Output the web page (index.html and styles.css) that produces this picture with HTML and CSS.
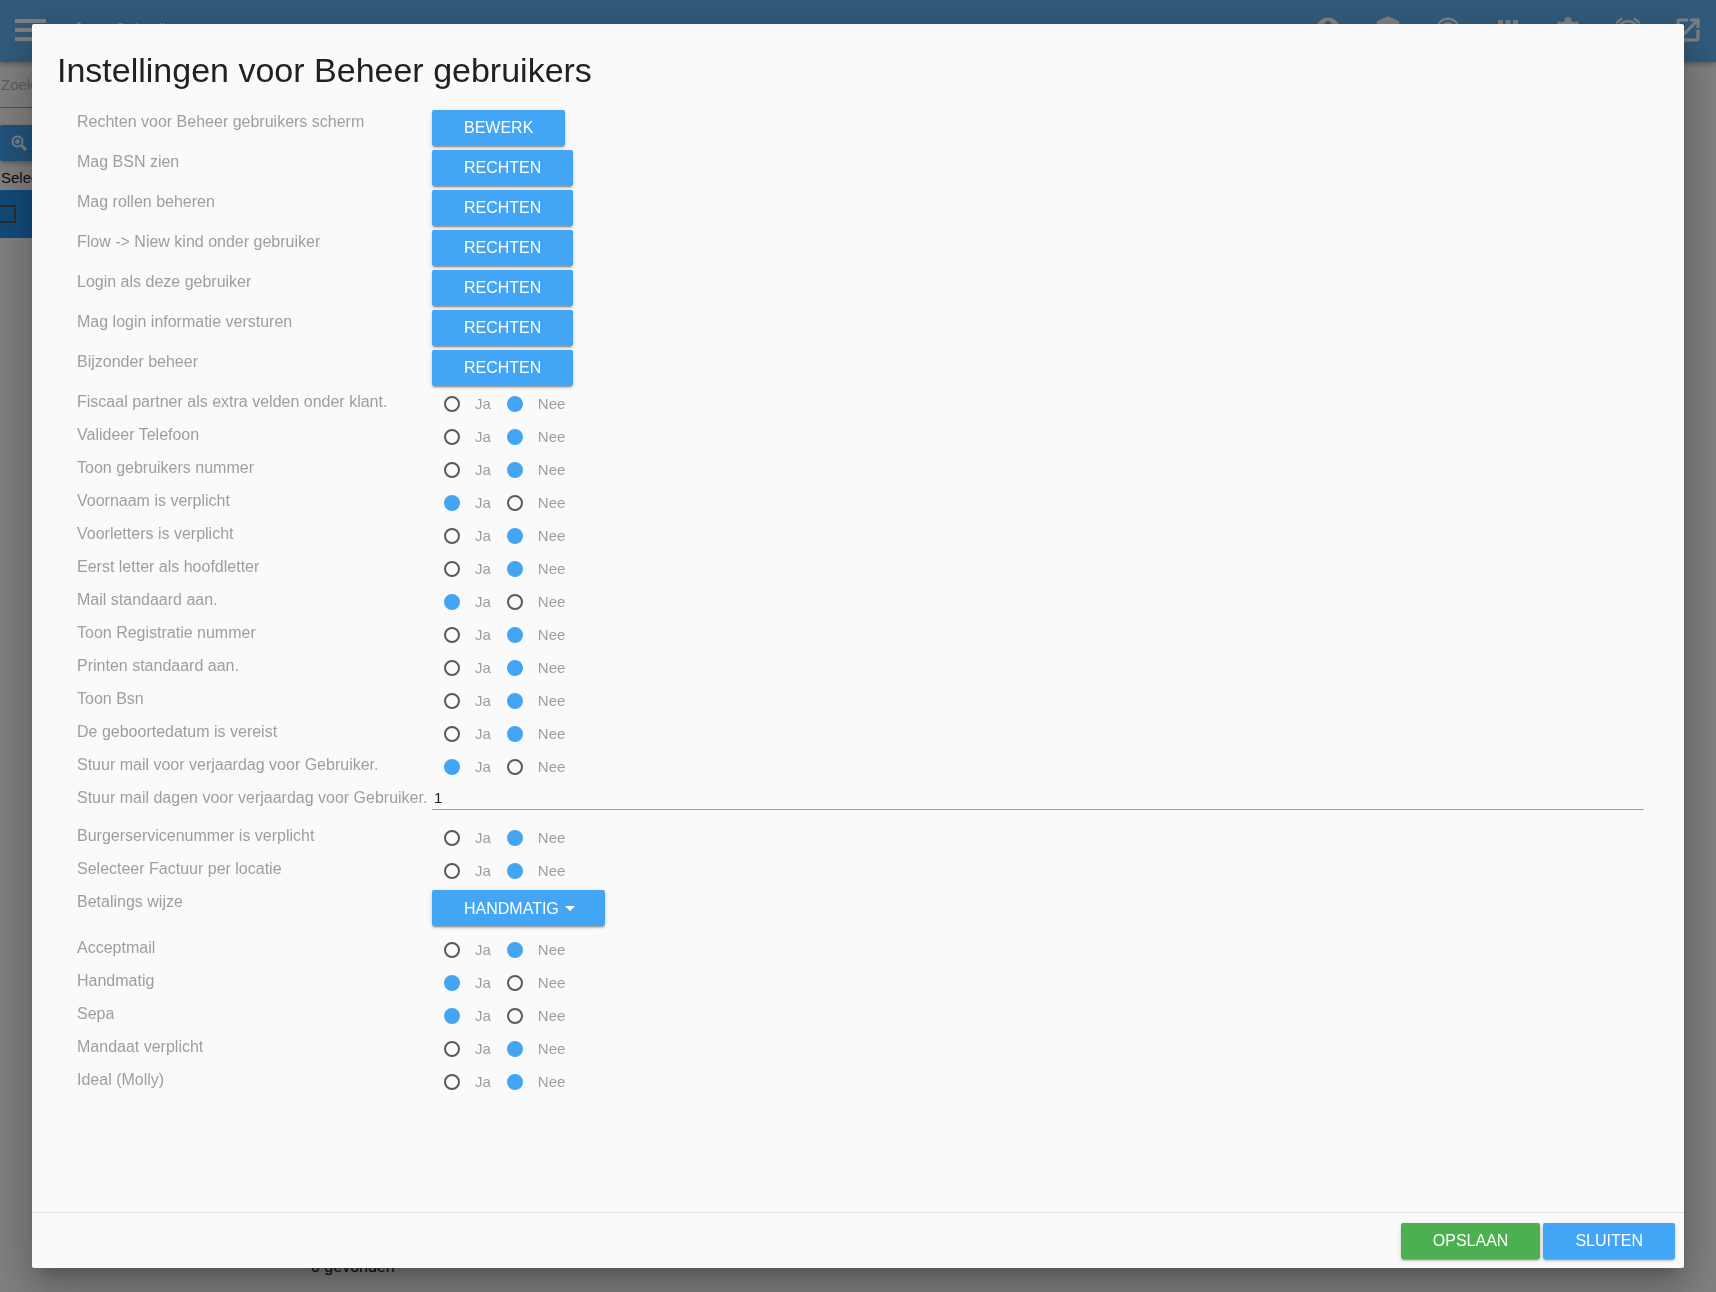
FILE: index.html
```html
<!DOCTYPE html>
<html lang="nl">
<head>
  <meta charset="UTF-8">
  <meta name="viewport" content="width=device-width, initial-scale=1.0">
  <title>Beheer gebruikers</title>
  <link rel="stylesheet" href="styles.css">
</head>
<body>
  <div class="page">
    <header class="topbar">
      <a href="#" class="menu" aria-label="Menu"><span></span><span></span><span></span></a>
      <a href="#" class="crumb">
        <svg viewBox="0 0 24 24"><path d="M12 3L1 13h3v8h6v-6h4v6h6v-8h3z"/></svg>
        Gebruikers
      </a>
      <nav class="tools">
        <a href="#" aria-label="Account"><svg viewBox="0 0 24 24"><path d="M12 2C6.480 2 2 6.480 2 12s4.480 10 10 10 10-4.480 10-10S17.520 2 12 2zm0 3c1.660 0 3 1.340 3 3s-1.340 3-3 3-3-1.340-3-3 1.340-3 3-3zm0 14.200c-2.500 0-4.710-1.280-6-3.220.03-1.990 4-3.080 6-3.080s5.970 1.090 6 3.080c-1.290 1.940-3.500 3.220-6 3.220z"/></svg></a>
        <a href="#" aria-label="Rechten"><svg viewBox="0 0 24 24"><path d="M12 1L3 5v6c0 5.550 3.840 10.740 9 12 5.160-1.260 9-6.450 9-12V5l-9-4z"/></svg></a>
        <a href="#" aria-label="Status"><svg viewBox="0 0 24 24"><circle class="line" cx="12" cy="12" r="9"/><circle class="line" cx="12" cy="12" r="5.500"/></svg></a>
        <a href="#" aria-label="Apps"><svg viewBox="0 0 24 24"><path d="M4 8h4V4H4v4zm6 12h4v-4h-4v4zm-6 0h4v-4H4v4zm0-6h4v-4H4v4zm6 0h4v-4h-4v4zm6-10v4h4V4h-4zm-6 4h4V4h-4v4zm6 6h4v-4h-4v4zm0 6h4v-4h-4v4z"/></svg></a>
        <a href="#" aria-label="Instellingen"><svg viewBox="0 0 24 24"><path d="M19.430 12.980c.04-.32.07-.64.07-.98s-.03-.66-.07-.98l2.110-1.650c.19-.15.24-.42.12-.64l-2-3.460c-.12-.22-.39-.3-.61-.22l-2.490 1c-.52-.4-1.080-.73-1.690-.98l-.38-2.650C14.460 2.180 14.250 2 14 2h-4c-.25 0-.46.18-.49.42l-.38 2.650c-.61.25-1.170.59-1.690.98l-2.490-1c-.23-.09-.49 0-.61.22l-2 3.460c-.13.22-.07.49.12.64l2.110 1.650c-.04.32-.07.65-.07.98s.03.66.07.98l-2.110 1.650c-.19.15-.24.42-.12.64l2 3.460c.12.22.39.3.61.22l2.490-1c.52.4 1.080.73 1.690.98l.38 2.650c.03.24.24.42.49.42h4c.25 0 .46-.18.49-.42l.38-2.650c.61-.25 1.170-.59 1.690-.98l2.490 1c.23.09.49 0 .61-.22l2-3.460c.12-.22.07-.49-.12-.64l-2.110-1.650zM12 15.500c-1.930 0-3.500-1.570-3.500-3.500s1.570-3.500 3.500-3.500 3.500 1.570 3.500 3.500-1.570 3.500-3.500 3.500z"/></svg></a>
        <a href="#" aria-label="Wekker"><svg viewBox="0 0 24 24"><path d="M22 5.720l-4.600-3.860-1.290 1.530 4.600 3.860L22 5.720zM7.880 3.390L6.600 1.860 2 5.710l1.290 1.530 4.590-3.850zM12.500 8H11v6l4.750 2.850.75-1.230-4-2.370V8zM12 4c-4.970 0-9 4.030-9 9s4.020 9 9 9 9-4.030 9-9-4.030-9-9-9zm0 16c-3.870 0-7-3.130-7-7s3.130-7 7-7 7 3.130 7 7-3.130 7-7 7z"/></svg></a>
        <a href="#" aria-label="Openen"><svg class="bold" viewBox="0 0 24 24"><path d="M19 19H5V5h7V3H5c-1.110 0-2 .9-2 2v14c0 1.100.89 2 2 2h14c1.100 0 2-.9 2-2v-7h-2v7zM14 3v2h3.590l-9.830 9.830 1.410 1.410L19 6.410V10h2V3h-7z"/></svg></a>
      </nav>
    </header>
    <input class="search" type="text" placeholder="Zoeken" aria-label="Zoeken">
    <button class="search-btn" type="button" aria-label="Zoek">
      <svg viewBox="0 0 16 16"><circle cx="6.500" cy="6.500" r="5"/><path class="handle" d="M10.500 10.500L15 15"/><path d="M6.500 4v5M4 6.500h5"/></svg>
    </button>
    <div class="list-head">Selecteer</div>
    <div class="list-row"><input type="checkbox" aria-label="Selecteer rij"></div>
    <div class="found">0 gevonden</div>
  </div>

  <div class="overlay">
    <form class="modal" role="dialog" aria-labelledby="title">
      <div class="modal-content">
        <h4 id="title">Instellingen voor Beheer gebruikers</h4>

        <div class="row row-btn"><label for="b1">Rechten voor Beheer gebruikers scherm</label><button type="button" class="btn" id="b1">BEWERK</button></div>
        <div class="row row-btn"><label for="b2">Mag BSN zien</label><button type="button" class="btn" id="b2">RECHTEN</button></div>
        <div class="row row-btn"><label for="b3">Mag rollen beheren</label><button type="button" class="btn" id="b3">RECHTEN</button></div>
        <div class="row row-btn"><label for="b4">Flow -&gt; Niew kind onder gebruiker</label><button type="button" class="btn" id="b4">RECHTEN</button></div>
        <div class="row row-btn"><label for="b5">Login als deze gebruiker</label><button type="button" class="btn" id="b5">RECHTEN</button></div>
        <div class="row row-btn"><label for="b6">Mag login informatie versturen</label><button type="button" class="btn" id="b6">RECHTEN</button></div>
        <div class="row row-btn"><label for="b7">Bijzonder beheer</label><button type="button" class="btn" id="b7">RECHTEN</button></div>

        <div class="row" role="radiogroup" aria-labelledby="l1"><span id="l1">Fiscaal partner als extra velden onder klant.</span><div class="choice"><label><input type="radio" name="r1">Ja</label><label><input type="radio" name="r1" checked>Nee</label></div></div>
        <div class="row" role="radiogroup" aria-labelledby="l2"><span id="l2">Valideer Telefoon</span><div class="choice"><label><input type="radio" name="r2">Ja</label><label><input type="radio" name="r2" checked>Nee</label></div></div>
        <div class="row" role="radiogroup" aria-labelledby="l3"><span id="l3">Toon gebruikers nummer</span><div class="choice"><label><input type="radio" name="r3">Ja</label><label><input type="radio" name="r3" checked>Nee</label></div></div>
        <div class="row" role="radiogroup" aria-labelledby="l4"><span id="l4">Voornaam is verplicht</span><div class="choice"><label><input type="radio" name="r4" checked>Ja</label><label><input type="radio" name="r4">Nee</label></div></div>
        <div class="row" role="radiogroup" aria-labelledby="l5"><span id="l5">Voorletters is verplicht</span><div class="choice"><label><input type="radio" name="r5">Ja</label><label><input type="radio" name="r5" checked>Nee</label></div></div>
        <div class="row" role="radiogroup" aria-labelledby="l6"><span id="l6">Eerst letter als hoofdletter</span><div class="choice"><label><input type="radio" name="r6">Ja</label><label><input type="radio" name="r6" checked>Nee</label></div></div>
        <div class="row" role="radiogroup" aria-labelledby="l7"><span id="l7">Mail standaard aan.</span><div class="choice"><label><input type="radio" name="r7" checked>Ja</label><label><input type="radio" name="r7">Nee</label></div></div>
        <div class="row" role="radiogroup" aria-labelledby="l8"><span id="l8">Toon Registratie nummer</span><div class="choice"><label><input type="radio" name="r8">Ja</label><label><input type="radio" name="r8" checked>Nee</label></div></div>
        <div class="row" role="radiogroup" aria-labelledby="l9"><span id="l9">Printen standaard aan.</span><div class="choice"><label><input type="radio" name="r9">Ja</label><label><input type="radio" name="r9" checked>Nee</label></div></div>
        <div class="row" role="radiogroup" aria-labelledby="l10"><span id="l10">Toon Bsn</span><div class="choice"><label><input type="radio" name="r10">Ja</label><label><input type="radio" name="r10" checked>Nee</label></div></div>
        <div class="row" role="radiogroup" aria-labelledby="l11"><span id="l11">De geboortedatum is vereist</span><div class="choice"><label><input type="radio" name="r11">Ja</label><label><input type="radio" name="r11" checked>Nee</label></div></div>
        <div class="row" role="radiogroup" aria-labelledby="l12"><span id="l12">Stuur mail voor verjaardag voor Gebruiker.</span><div class="choice"><label><input type="radio" name="r12" checked>Ja</label><label><input type="radio" name="r12">Nee</label></div></div>

        <div class="row row-text"><label for="dagen">Stuur mail dagen voor verjaardag voor Gebruiker.</label><input type="text" id="dagen" value="1"></div>

        <div class="row" role="radiogroup" aria-labelledby="l13"><span id="l13">Burgerservicenummer is verplicht</span><div class="choice"><label><input type="radio" name="r13">Ja</label><label><input type="radio" name="r13" checked>Nee</label></div></div>
        <div class="row" role="radiogroup" aria-labelledby="l14"><span id="l14">Selecteer Factuur per locatie</span><div class="choice"><label><input type="radio" name="r14">Ja</label><label><input type="radio" name="r14" checked>Nee</label></div></div>

        <div class="row row-select"><label for="wijze">Betalings wijze</label><div class="dropdown"><select class="btn" id="wijze"><option>HANDMATIG</option></select></div></div>

        <div class="row" role="radiogroup" aria-labelledby="l15"><span id="l15">Acceptmail</span><div class="choice"><label><input type="radio" name="r15">Ja</label><label><input type="radio" name="r15" checked>Nee</label></div></div>
        <div class="row" role="radiogroup" aria-labelledby="l16"><span id="l16">Handmatig</span><div class="choice"><label><input type="radio" name="r16" checked>Ja</label><label><input type="radio" name="r16">Nee</label></div></div>
        <div class="row" role="radiogroup" aria-labelledby="l17"><span id="l17">Sepa</span><div class="choice"><label><input type="radio" name="r17" checked>Ja</label><label><input type="radio" name="r17">Nee</label></div></div>
        <div class="row" role="radiogroup" aria-labelledby="l18"><span id="l18">Mandaat verplicht</span><div class="choice"><label><input type="radio" name="r18">Ja</label><label><input type="radio" name="r18" checked>Nee</label></div></div>
        <div class="row" role="radiogroup" aria-labelledby="l19"><span id="l19">Ideal (Molly)</span><div class="choice"><label><input type="radio" name="r19">Ja</label><label><input type="radio" name="r19" checked>Nee</label></div></div>
      </div>
      <div class="modal-footer">
        <button type="button" class="btn green">OPSLAAN</button>
        <button type="button" class="btn">SLUITEN</button>
      </div>
    </form>
  </div>
</body>
</html>
```
FILE: styles.css
```css
* {
  box-sizing: border-box;
}
body {
  margin: 0;
  font-family: "Liberation Sans", Arial, sans-serif;
  font-size: 16px;
  line-height: 24px;
  color: #212121;
  background-color: #fff;
}
input, button, select {
  font-family: inherit;
  font-size: inherit;
}

/* page behind the modal */
.page {
  display: flex;
  flex-direction: column;
  align-items: flex-start;
  height: 100vh;
  overflow: hidden;
}
.topbar {
  display: flex;
  align-items: center;
  align-self: stretch;
  height: 62px;
  flex-shrink: 0;
  padding: 0 13px 0 15px;
  background-color: #64b5f6;
  box-shadow: 0 2px 5px rgba(0, 0, 0, 0.3);
}
.topbar a {
  color: #fff;
  text-decoration: none;
}
.menu {
  display: flex;
  flex-direction: column;
  gap: 5px;
  width: 31px;
  padding-bottom: 3px;
}
.menu span {
  height: 4px;
  background-color: #fff;
}
.crumb {
  display: flex;
  align-items: center;
  gap: 24px;
  margin-left: 22px;
  padding-bottom: 2px;
}
.crumb svg {
  width: 22px;
  height: 22px;
  fill: #fff;
}
.tools {
  display: flex;
  gap: 30px;
  margin-left: auto;
  padding-bottom: 2px;
}
.tools a, .tools svg {
  display: block;
  width: 30px;
  height: 30px;
  fill: #fff;
}
.tools .line {
  fill: none;
  stroke: #fff;
  stroke-width: 2;
}
.tools .bold {
  stroke: #fff;
  stroke-width: 0.5;
}
.search {
  width: 300px;
  height: 46px;
  padding: 0 1px;
  border: 0;
  border-bottom: 1px solid #9e9e9e;
  font-size: 15px;
  background: none;
}
.search::placeholder {
  color: #bdbdbd;
}
.search-btn {
  width: 120px;
  height: 36px;
  margin-top: 17px;
  padding: 0 11px;
  border: 0;
  border-radius: 2px;
  text-align: left;
  background-color: #42a5f5;
  box-shadow: 0 2px 5px rgba(0, 0, 0, 0.3);
}
.search-btn svg {
  display: block;
  width: 16px;
  height: 16px;
  fill: none;
  stroke: #fff;
  stroke-width: 2;
}
.search-btn .handle {
  stroke-width: 3;
}
.list-head {
  padding: 5px 1px 0;
  font-size: 15px;
}
.list-row {
  display: flex;
  align-items: center;
  width: 400px;
  height: 48px;
  background-color: #2196f3;
}
.list-row input {
  appearance: none;
  width: 18px;
  height: 18px;
  margin: 0 0 0 -2px;
  border: 2px solid #5a5a5a;
}
.found {
  margin-top: auto;
  padding: 0 0 13px 311px;
}

/* modal */
.overlay {
  position: fixed;
  inset: 0;
  display: flex;
  padding: 24px 32px;
  background-color: rgba(0, 0, 0, 0.5);
}
.modal {
  display: flex;
  flex-direction: column;
  flex: 1;
  border-radius: 2px;
  background-color: #fafafa;
  box-shadow: 0 24px 38px 3px rgba(0, 0, 0, 0.14), 0 9px 46px 8px rgba(0, 0, 0, 0.12), 0 11px 15px -7px rgba(0, 0, 0, 0.2);
}
.modal-content {
  flex: 1;
  overflow: auto;
  padding: 24px 24px 24px 25px;
}
h4 {
  margin: 0 0 16px;
  font-size: 34px;
  font-weight: 400;
  line-height: 44px;
}
.row {
  display: grid;
  grid-template-columns: 355px 1fr;
  align-items: start;
  justify-items: start;
  height: 33px;
  padding: 0 16px 0 20px;
  color: #9e9e9e;
}
.row > label, .row > span {
  line-height: 28px;
}
.row-btn {
  height: 40px;
}
.row-text {
  height: 38px;
}
.row-select {
  height: 46px;
}
.row-btn .btn, .row-select .btn {
  margin-top: 2px;
}
.btn {
  height: 36px;
  padding: 0 32px;
  border: 0;
  border-radius: 2px;
  color: #fff;
  background-color: #42a5f5;
  box-shadow: 0 2px 2px rgba(0, 0, 0, 0.14), 0 1px 5px rgba(0, 0, 0, 0.12), 0 3px 1px -2px rgba(0, 0, 0, 0.2);
  cursor: pointer;
}
.green {
  background-color: #4caf50;
}
.choice {
  display: flex;
  gap: 16px;
  padding: 4px 0 0 12px;
}
.choice label {
  display: flex;
  align-items: center;
  gap: 15px;
  font-size: 15px;
  line-height: 24px;
}
.choice input {
  appearance: none;
  width: 16px;
  height: 16px;
  margin: 0;
  border: 2px solid #5a5a5a;
  border-radius: 50%;
}
.choice input:checked {
  border-color: #42a5f5;
  background-color: #42a5f5;
}
.row-text input {
  width: 100%;
  height: 26px;
  padding: 2px 2px 0;
  border: 0;
  border-bottom: 1px solid #9e9e9e;
  font-size: 15px;
  color: #212121;
  background: none;
}
.dropdown {
  position: relative;
}
.dropdown select {
  appearance: none;
  padding-right: 46px;
}
.dropdown::after {
  content: "";
  position: absolute;
  top: 18px;
  right: 30px;
  border: 5px solid transparent;
  border-top-color: #fff;
  border-bottom: 0;
  pointer-events: none;
}
.modal-footer {
  display: flex;
  justify-content: flex-end;
  gap: 3px;
  padding: 10px 9px 9px;
  border-top: 1px solid #e0e0e0;
}
```
